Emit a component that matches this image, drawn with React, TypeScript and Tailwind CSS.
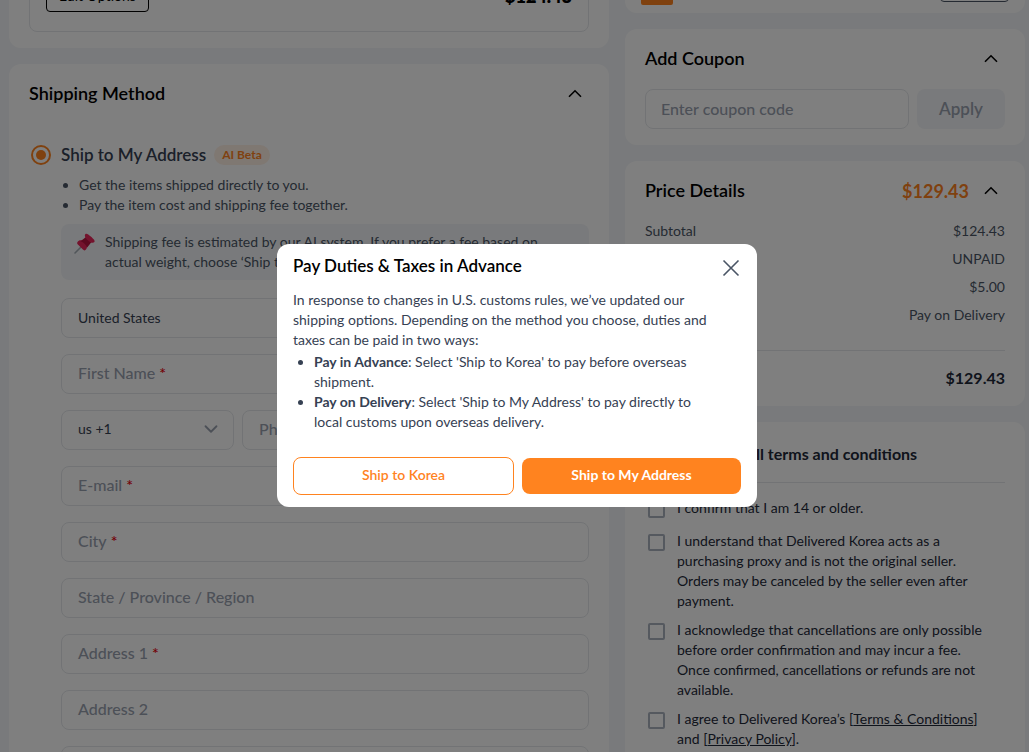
import React, { useState } from 'react';
import { ChevronDown } from 'lucide-react';

const fields = [
  { id: 'firstName', label: 'First Name', required: true },
  { id: 'email', label: 'E-mail', required: true },
  { id: 'city', label: 'City', required: true },
  { id: 'state', label: 'State / Province / Region', required: false },
  { id: 'address1', label: 'Address 1', required: true },
  { id: 'address2', label: 'Address 2', required: false },
  { id: 'zip', label: 'Zip Code', required: true }
];

const prices = [
  { label: 'Subtotal', value: '$124.43' },
  { label: 'Shipping Fee', value: 'UNPAID' },
  { label: 'Service Fee', value: '$5.00' },
  { label: 'Duties & Taxes', value: 'Pay on Delivery' }
];

const ToggleButton = ({ label }: { label: string }) => (
  <button type="button" aria-label={label} className="flex h-7 w-7 items-center justify-center text-black">
    <svg viewBox="0 0 24 24" className="h-6 w-6" fill="none" stroke="currentColor" strokeWidth="1.6">
      <path d="M6 14.8 12 8.8l6 6" />
    </svg>
  </button>
);

const PinIcon = () => (
  <svg viewBox="0 0 24 24" className="h-6 w-6 shrink-0" aria-hidden="true">
    <path d="M9.500 13.500 2 21" stroke="#a3acb5" strokeWidth="1.6" strokeLinecap="round" />
    <path d="M4.500 10c1.500-2.500 4.500-2.500 7.300.1 2.800 2.600 3 5.800.9 7.700-1.100 1-2 .6-2.800-.2l-5-5c-.8-.8-1-1.700-.4-2.600Z" fill="#e8265b" />
    <path d="M7.500 9.300 13 5l5.500 5-4.300 5.500c-1.200-2.800-3.500-5.200-6.700-6.200Z" fill="#b81440" />
    <path d="M12.300 2.200c1.200-1.300 3 .2 5.500 2.300 2.600 2.300 4.600 4.200 3.600 5.500-1.200 1.500-3.800.8-6.300-1.500-2.600-2.300-4-4.900-2.800-6.300Z" fill="#e8265b" />
  </svg>
);

const Field = ({ id, label, required }: { id: string; label: string; required: boolean }) => {
  const [value, setValue] = useState('');

  return (
    <div className="relative flex-1">
      <input
        type="text"
        id={id}
        value={value}
        onChange={(e) => setValue(e.target.value)}
        className="block h-10 w-full rounded-lg border border-gray-200 px-4 text-base text-gray-700"
      />
      {!value && (
        <label
          htmlFor={id}
          className="pointer-events-none absolute top-0 bottom-0.5 left-[17px] flex items-center gap-1 text-base font-medium text-gray-400"
        >
          {label}
          {required && <span className="text-red-600">*</span>}
        </label>
      )}
    </div>
  );
};

const ShippingMethod = () => (
  <section className="rounded-xl bg-white px-5 py-4">
    <div className="flex items-center justify-between">
      <h2 className="pb-0.5 text-lg leading-[26px] font-semibold text-black">Shipping Method</h2>
      <ToggleButton label="Toggle shipping method" />
    </div>

    <div className="mt-[35px] flex items-center">
      <input
        type="radio"
        id="shipToMyAddress"
        name="shipping"
        defaultChecked
        className="ml-0.5 h-5 w-5 appearance-none rounded-full border-2 border-[#ff831f] bg-[#ff831f] bg-clip-content p-[3px]"
      />
      <label htmlFor="shipToMyAddress" className="ml-2.5 text-[17px] leading-6 font-semibold text-gray-700">
        Ship to My Address
      </label>
      <span className="ml-2 rounded-full bg-[#fff0e5] px-2 text-xs leading-5 font-bold text-[#ff831f]">AI Beta</span>
    </div>

    <div className="mt-2 pl-8">
      <ul className="list-disc pl-[18px] text-sm text-gray-600">
        <li>Get the items shipped directly to you.</li>
        <li>Pay the item cost and shipping fee together.</li>
      </ul>

      <div className="mt-[9px] flex gap-2 rounded-lg bg-[#f3f5f8] px-3 py-2">
        <PinIcon />
        <p className="text-sm text-gray-600">
          Shipping fee is estimated by our AI system. If you prefer a fee based on
          <br />
          actual weight, choose ‘Ship to Korea’.
        </p>
      </div>

      <div className="mt-[18px] flex flex-col gap-4">
        <input
          type="text"
          aria-label="Country"
          defaultValue="United States"
          className="h-10 w-full rounded-lg border border-gray-200 px-4 pb-0.5 text-sm text-gray-700"
        />
        <Field {...fields[0]} />
        <div className="flex gap-2">
          <div className="relative w-[173px]">
            <select
              aria-label="Country code"
              className="h-10 w-full appearance-none rounded-lg border border-gray-200 px-4 pb-0.5 text-sm text-gray-700"
            >
              <option>us +1</option>
            </select>
            <ChevronDown className="pointer-events-none absolute top-2 right-3 h-[22px] w-[22px] text-gray-400" />
          </div>
          <Field id="phone" label="Phone Number" required />
        </div>
        {fields.slice(1).map(field => (
          <Field key={field.id} {...field} />
        ))}
      </div>
    </div>
  </section>
);

const Coupon = () => (
  <section className="rounded-xl bg-white px-5 py-4">
    <div className="flex items-center justify-between">
      <h2 className="pb-0.5 text-lg leading-[26px] font-semibold text-black">Add Coupon</h2>
      <ToggleButton label="Toggle coupon" />
    </div>
    <div className="mt-4 flex gap-2">
      <input
        type="text"
        aria-label="Coupon code"
        placeholder="Enter coupon code"
        className="h-10 min-w-0 flex-1 rounded-lg border border-gray-200 px-[15px] pb-0.5 text-base font-medium placeholder:text-gray-400"
      />
      <button type="button" className="h-10 w-[88px] rounded-lg bg-[#f3f5f8] text-[17px] font-semibold text-gray-400">
        Apply
      </button>
    </div>
  </section>
);

const PriceDetails = () => (
  <section className="rounded-xl bg-white px-5 py-4">
    <div className="flex items-center justify-between">
      <h2 className="pb-0.5 text-lg leading-[26px] font-semibold text-black">Price Details</h2>
      <div className="flex items-center gap-2">
        <span className="text-lg leading-7 font-bold text-[#ff831f]">$129.43</span>
        <ToggleButton label="Toggle price details" />
      </div>
    </div>
    <dl className="mt-4 flex flex-col gap-2 text-sm text-gray-600">
      {prices.map(price => (
        <div key={price.label} className="flex justify-between">
          <dt>{price.label}</dt>
          <dd>{price.value}</dd>
        </div>
      ))}
    </dl>
    <div className="mt-[25px] flex justify-between border-t border-gray-200 pt-[15px] text-base font-bold text-gray-800">
      <span>Total</span>
      <span>$129.43</span>
    </div>
  </section>
);

const Checkbox = ({ id }: { id: string }) => (
  <input
    type="checkbox"
    id={id}
    className="mt-[3px] mr-1 mb-1 ml-[3px] h-[17px] w-[17px] shrink-0 appearance-none rounded-xs border-2 border-[#aab2be] checked:bg-[#ff831f]"
  />
);

const Term = ({ id, children }: { id: string; children: React.ReactNode }) => (
  <li className="flex gap-2">
    <Checkbox id={id} />
    <label htmlFor={id}>{children}</label>
  </li>
);

const Terms = () => (
  <section className="rounded-xl bg-white px-5 pt-5 pb-4">
    <div className="flex items-center gap-2 border-b border-gray-200 pb-4">
      <Checkbox id="agreeAll" />
      <label htmlFor="agreeAll" className="text-base font-bold text-gray-800">
        I agree to all terms and conditions
      </label>
    </div>
    <ul className="mt-[15px] flex flex-col gap-[9px] text-sm text-gray-800">
      <Term id="age">I confirm that I am 14 or older.</Term>
      <Term id="proxy">
        I understand that Delivered Korea acts as a<br />
        purchasing proxy and is not the original seller.
        <br />
        Orders may be canceled by the seller even after
        <br />
        payment.
      </Term>
      <Term id="cancellation">
        I acknowledge that cancellations are only possible
        <br />
        before order confirmation and may incur a fee.
        <br />
        Once confirmed, cancellations or refunds are not
        <br />
        available.
      </Term>
      <Term id="policy">
        I agree to Delivered Korea’s [<a href="#terms" className="underline">Terms &amp; Conditions</a>]
        <br />
        and [<a href="#privacy" className="underline">Privacy Policy</a>].
      </Term>
    </ul>
  </section>
);

const DutiesModal = ({ onClose }: { onClose: () => void }) => (
  <div className="fixed inset-0 flex items-center justify-center bg-black/50 pb-0.5 pl-[5px]">
    <div role="dialog" aria-labelledby="dutiesTitle" className="w-[480px] rounded-xl bg-white px-4 pt-2.5 pb-3">
      <div className="flex items-end justify-between">
        <h2 id="dutiesTitle" className="text-[17px] leading-6 font-semibold text-black">
          Pay Duties &amp; Taxes in Advance
        </h2>
        <button type="button" aria-label="Close" onClick={onClose}>
          <svg viewBox="0 0 20 20" className="h-5 w-5 text-gray-600" fill="none" stroke="currentColor" strokeWidth="1.6">
            <path d="M2.500 2.500l15 15M17.500 2.500l-15 15" />
          </svg>
        </button>
      </div>

      <div className="mt-3 text-sm text-gray-700">
        <p>
          In response to changes in U.S. customs rules, we’ve updated our
          <br />
          shipping options. Depending on the method you choose, duties and
          <br />
          taxes can be paid in two ways:
        </p>
        <ul className="mt-0.5 list-disc pl-[21px]">
          <li>
            <strong className="font-bold">Pay in Advance</strong>: Select 'Ship to Korea' to pay before overseas
            <br />
            shipment.
          </li>
          <li>
            <strong className="font-bold">Pay on Delivery</strong>: Select 'Ship to My Address' to pay directly to
            <br />
            local customs upon overseas delivery.
          </li>
        </ul>
      </div>

      <div className="mt-[25px] flex items-center gap-2">
        <button
          type="button"
          onClick={onClose}
          className="h-[38px] flex-1 rounded-lg border border-[#ff831f] pb-0.5 text-sm font-semibold text-[#ff831f]"
        >
          Ship to Korea
        </button>
        <button type="button" onClick={onClose} className="h-9 flex-1 rounded-lg bg-[#ff831f] pb-0.5 text-sm font-bold text-white">
          Ship to My Address
        </button>
      </div>
    </div>
  </div>
);

export default function App() {
  const [showModal, setShowModal] = useState(true);

  return (
    <div className="h-screen overflow-hidden bg-[#f3f5f8] font-['Lato',sans-serif]">
      <main className="-mt-6 flex items-start gap-4 pr-1 pl-[9px]">
        <div className="flex flex-1 flex-col gap-4">
          <section className="rounded-b-xl bg-white px-5 pb-4">
            <div className="flex items-start justify-between rounded-b-lg border border-gray-200 px-4 pt-[5px] pb-[19px]">
              <button type="button" className="h-[30px] rounded-sm border border-black px-3 pb-0.5 text-sm text-black">
                Edit Options
              </button>
              <span className="text-lg leading-7 font-extrabold text-black">$124.43</span>
            </div>
          </section>
          <ShippingMethod />
        </div>

        <div className="flex w-[400px] flex-col gap-4">
          <section className="flex items-start justify-between rounded-b-xl bg-white px-4 pb-2">
            <div className="h-[29px] w-8 rounded-xs bg-[#ff831f]" />
            <button type="button" aria-label="Edit" className="h-[26px] w-[69px] rounded-sm border border-gray-600" />
          </section>
          <Coupon />
          <PriceDetails />
          <Terms />
        </div>
      </main>

      {showModal && <DutiesModal onClose={() => setShowModal(false)} />}
    </div>
  );
}
